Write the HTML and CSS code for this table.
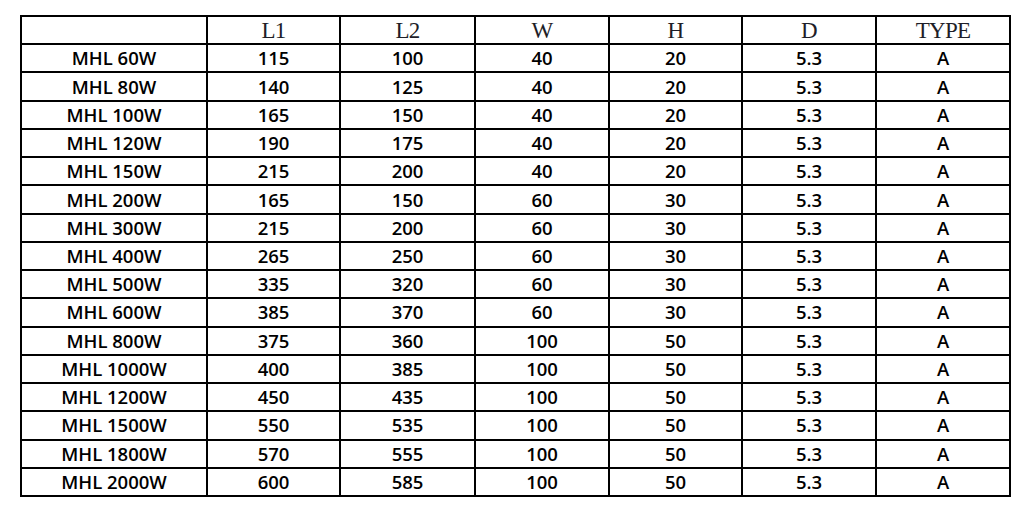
FILE: index.html
```html
<!DOCTYPE html>
<html>
<head>
<meta charset="utf-8">
<link rel="stylesheet" href="styles.css">
</head>
<body>
<table class="spec">
<colgroup>
<col class="c-model"><col class="c-num2"><col class="c-num3"><col class="c-num"><col class="c-num2"><col class="c-num"><col class="c-num">
</colgroup>
<thead>
<tr><th></th><th>L1</th><th>L2</th><th>W</th><th>H</th><th>D</th><th>TYPE</th></tr>
</thead>
<tbody>
<tr><td>MHL 60W</td><td>115</td><td>100</td><td>40</td><td>20</td><td>5.3</td><td>A</td></tr>
<tr><td>MHL 80W</td><td>140</td><td>125</td><td>40</td><td>20</td><td>5.3</td><td>A</td></tr>
<tr><td>MHL 100W</td><td>165</td><td>150</td><td>40</td><td>20</td><td>5.3</td><td>A</td></tr>
<tr><td>MHL 120W</td><td>190</td><td>175</td><td>40</td><td>20</td><td>5.3</td><td>A</td></tr>
<tr><td>MHL 150W</td><td>215</td><td>200</td><td>40</td><td>20</td><td>5.3</td><td>A</td></tr>
<tr><td>MHL 200W</td><td>165</td><td>150</td><td>60</td><td>30</td><td>5.3</td><td>A</td></tr>
<tr><td>MHL 300W</td><td>215</td><td>200</td><td>60</td><td>30</td><td>5.3</td><td>A</td></tr>
<tr><td>MHL 400W</td><td>265</td><td>250</td><td>60</td><td>30</td><td>5.3</td><td>A</td></tr>
<tr><td>MHL 500W</td><td>335</td><td>320</td><td>60</td><td>30</td><td>5.3</td><td>A</td></tr>
<tr><td>MHL 600W</td><td>385</td><td>370</td><td>60</td><td>30</td><td>5.3</td><td>A</td></tr>
<tr><td>MHL 800W</td><td>375</td><td>360</td><td>100</td><td>50</td><td>5.3</td><td>A</td></tr>
<tr><td>MHL 1000W</td><td>400</td><td>385</td><td>100</td><td>50</td><td>5.3</td><td>A</td></tr>
<tr><td>MHL 1200W</td><td>450</td><td>435</td><td>100</td><td>50</td><td>5.3</td><td>A</td></tr>
<tr><td>MHL 1500W</td><td>550</td><td>535</td><td>100</td><td>50</td><td>5.3</td><td>A</td></tr>
<tr><td>MHL 1800W</td><td>570</td><td>555</td><td>100</td><td>50</td><td>5.3</td><td>A</td></tr>
<tr><td>MHL 2000W</td><td>600</td><td>585</td><td>100</td><td>50</td><td>5.3</td><td>A</td></tr>
</tbody>
</table>
</body>
</html>
```
FILE: styles.css
```css
html, body {
  margin: 0;
  padding: 0;
  background: #ffffff;
}
body {
  padding: 15px 0 0 20px;
}
.spec {
  table-layout: fixed;
  width: 991px;
  border-collapse: separate;
  border-spacing: 2px;
  background: #000000;
}
.c-model { width: 184px; }
.c-num2 { width: 131px; }
.c-num3 { width: 133px; }
.c-num { width: 132px; }
.spec th,
.spec td {
  background: #ffffff;
  padding: 0;
  height: 26.24px;
  text-align: center;
  vertical-align: middle;
  white-space: nowrap;
}
.spec th {
  font-family: "Liberation Serif", "DejaVu Serif", serif;
  font-weight: 400;
  font-size: 23px;
  letter-spacing: -0.8px;
  color: #1e1e28;
  line-height: 24px;
  height: 24.24px;
  padding-top: 2px;
}
.spec td {
  font-family: "Open Sans", "Noto Sans", sans-serif;
  font-weight: 600;
  font-size: 18.5px;
  color: #000000;
  line-height: 24px;
}
```
